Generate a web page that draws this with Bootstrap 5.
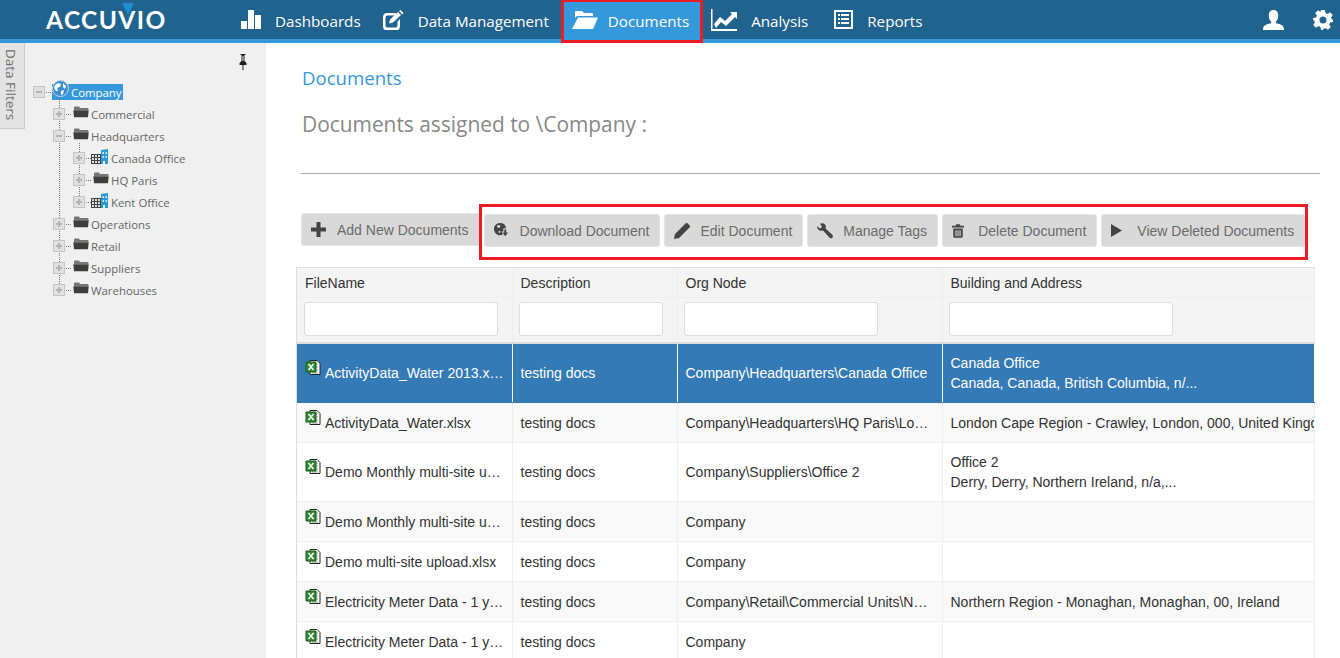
<!DOCTYPE html>
<html lang="en"><head><meta charset="utf-8"><title>Documents</title>
<link href="https://cdn.jsdelivr.net/npm/bootstrap@5.3.0/dist/css/bootstrap.min.css" rel="stylesheet">
<script src="https://cdn.jsdelivr.net/npm/bootstrap@5.3.0/dist/js/bootstrap.bundle.min.js"></script>
<style>
html,body{height:658px;overflow:hidden;background:#fff}
body{font-family:"Liberation Sans",Arial,sans-serif;font-size:14px;color:#333}
.top-bar{height:43px;background:#20638f;border-bottom:4px solid #3498db;padding:0;font-family:"Open Sans",sans-serif;flex-wrap:nowrap;align-items:stretch}
.brand{width:238px;padding-left:46px;position:relative;color:#fff;font:700 24.5px/39px "Lato",sans-serif;letter-spacing:1.4px;flex:none}
.brand-tri{position:absolute;left:122px;top:3px}
.top-link{display:flex;align-items:center;color:#fff;font-size:15.2px;height:43px;padding:1px 0 1px;text-decoration:none;flex:none;white-space:nowrap}
.top-link svg{fill:#fff;flex:none;margin-right:14px;margin-bottom:4px}
.top-link.on{background:#3498db;border:3px solid #ed1c24;border-top-width:2px;padding:0 11px 0 8px;margin-left:12px}
.top-link.on svg{margin-right:10px;margin-bottom:2px}
.nl-dash{margin-left:3px}.nl-data{margin-left:22px}.nl-ana{margin-left:8px}.nl-rep{margin-left:26px}
.nl-user{margin-left:auto}.nl-gear{margin:0 7px 0 29px}
.nl-user svg,.nl-gear svg{margin-right:0}
.app-body{height:615px}
.tab-col{width:25px;background:#f0f0f0;flex:none}
.tab-v{width:25px;height:86px;background:#e3e3e3;border-right:1px solid #ccc;border-bottom:1px solid #ccc;writing-mode:vertical-rl;color:#707070;font:13.5px/26px "Open Sans",sans-serif;padding-top:6px}
.side{width:241px;background:#f0f0f0;flex:none;font-family:"Open Sans",sans-serif;font-size:11.4px;color:#666;position:relative}
.pin{position:absolute;left:213px;top:11px}
.tree-root{margin:38px 0 0 8px;padding:0;list-style:none}
.tree-kids{padding:0 0 0 20px;margin:0;list-style:none;position:relative}
.tree-kids::before{content:"";position:absolute;left:26px;top:-4px;bottom:11px;border-left:1px dotted #777}
.node{height:22px;display:flex;align-items:center;white-space:nowrap;position:relative}
.box{width:12px;height:12px;flex:none;border:1px solid #c4c4c4;background:#e0e0e0;position:relative;margin-right:8px;z-index:1}
.box::before{content:"";position:absolute;left:2px;right:2px;top:4px;height:2px;background:#b4b4b4}
.box.plus::after{content:"";position:absolute;top:2px;bottom:2px;left:4px;width:2px;background:#b4b4b4}
.node::after{content:"";position:absolute;left:13px;top:11px;width:5px;border-top:1px dotted #777}
.box.b-3{margin-right:6px}
.folder{margin-bottom:5px;flex:none}
.bldg{margin-bottom:3px;flex:none}
.indent{margin-left:2px}
.lbl{line-height:17px;margin-left:2px}
.sel-wrap{display:flex;align-items:center;background:#3498db;color:#fff;height:16px;margin-left:-1px;padding-right:1px}
.globe{margin-top:-7px;flex:none}
.main{flex:1;padding:0 0 0 30px;min-width:0;overflow:hidden}
.crumb{color:#3498db;font:18.6px/24px "Open Sans",sans-serif;margin:23px 0 0 6px}
.sub-title{color:#888;font:20.9px/30px "Open Sans",sans-serif;margin:19px 0 0 6px}
.rule{margin:34px 20px 0 5px;border-top:1px solid #aaa;opacity:1}
.tool-row{margin:30px 0 0 5px;align-items:flex-start;height:56px}
.tool-row>.tbtn{margin-top:9px}
.tool-group{border:3px solid #ed1c24;height:56px;padding:0 0 3px 2px;gap:4px;align-items:center;margin-left:-1px}
.tbtn{display:flex;align-items:center;height:33px;background:#d9d9d9;border:1px solid #e4e4e4;border-radius:3px;color:#6b6b6b;font-size:14px;padding:2px 10px 0 9px;white-space:nowrap}
.ico{width:26px;flex:none;display:flex;fill:#444;margin-top:-2px}
.grid-wrap{width:1019px;margin-top:7px;border:1px solid #ddd;border-bottom:0}
.doc-table{table-layout:fixed;width:1018px;margin:0;border-collapse:collapse;--bs-table-bg:transparent}
.c1{width:215px}.c2{width:165px}.c3{width:265px}
.doc-table th{background:#f4f4f4;font-weight:400;color:#333;padding:3px 8px 0;border:0;border-right:1px solid #eee;height:29px;vertical-align:middle;box-shadow:none}
.doc-table .filter td{background:#f4f4f4;padding:4px 6px 0;height:46px;border-top:1px solid #eee;border-bottom:2px solid #ddd;vertical-align:top}
.doc-table .filter td:first-child{padding-left:7px}
.doc-table .form-control{height:34px;border-radius:3px;border:1px solid #ddd;padding:0}
.f-194{width:194px}.f-144{width:144px}.f-224{width:224px}
.doc-table td{padding:1px 8px 0;border:0;border-right:1px solid #eee;border-bottom:1px solid #eee;vertical-align:middle;height:40px;line-height:20px;white-space:nowrap;overflow:hidden;text-overflow:ellipsis;color:#333;box-shadow:none}
.doc-table td.bare{text-overflow:clip}
.doc-table tr.tall td{height:59px}
.doc-table tr.alt td{background:#f9f9f9}
.doc-table tr.pick td{background:#337ab7;color:#fff;border-right-color:#fff;border-bottom-color:#337ab7}
.xl{vertical-align:-1px;margin-right:4px;position:relative;top:-3px}
</style></head><body>
<svg width="0" height="0" class="d-block position-absolute">
<symbol id="folder" viewBox="0 0 16 12"><path d="M1 3V1.400Q1 .6 2 .6H6L7 2H14.500Q15.500 2 15.500 3V4H1Z" fill="#777"/><path d="M.3 4.300H15.700L15 11.300H1Z" fill="#3d3d3d"/></symbol>
<symbol id="bldg" viewBox="0 0 18 16"><path d="M0 5h10v10H0z" fill="#444"/><path d="M1 6h2v2H1zM4 6h2v2H4zM7 6h2v2H7zM1 9h2v2H1zM4 9h2v2H4zM7 9h2v2H7zM1 12h2v2H1zM4 12h2v2H4zM7 12h2v2H7z" fill="#ddd"/><path d="M10 1l7-1v15h-3v-3h-2v3h-2z" fill="#2c9ad8"/><path d="M11.500 3h1.500v2h-1.500zM14.500 3h1.500v2h-1.500zM11.500 7h1.500v2h-1.500zM14.500 7h1.500v2h-1.500z" fill="#cfeafa"/></symbol>
<symbol id="xls" viewBox="0 0 16 16"><path d="M5 .5h7l3 3v11H5z" fill="#fff" stroke="#222"/><path d="M7 4h6M7 7h6M7 10h6M7 13h6" stroke="#9a9a9a"/><path d="M1 2h10v10H1z" fill="#2f8a2f" stroke="#1d5e1d"/><path d="M3.500 4l5 6M8.500 4l-5 6" stroke="#fff" stroke-width="1.500"/></symbol>
</svg>
<nav class="navbar top-bar d-flex">
<div class="brand">ACCUVIO<svg class="brand-tri" width="12" height="12" viewBox="0 0 12 12"><path d="M0 0H12L6 12Z" fill="#1b8fd0"/></svg></div>
<a class="top-link nl-dash" href="#"><svg width="20" height="19" viewBox="0 0 20 19"><path d="M0 11h6v8H0zM7 0h6v19H7zM14 5h6v14h-6z"/></svg>Dashboards</a>
<a class="top-link nl-data" href="#"><svg width="21" height="20" viewBox="0 0 21 20"><path d="M4 3h9v2.500H4.500q-2 0-2 2v8q0 2 2 2h8q2 0 2-2v-4l2.500-2.500v7q0 4.500-4.500 4.500H4q-4 0-4-4.500V7.500Q0 3 4 3Z"/><path d="M7 9.500L15 2l3 3-8 7.500-4 1ZM16 1l1.500-1 3 3-1 1.500Z"/></svg>Data Management</a>
<a class="top-link on" href="#"><svg width="26" height="20" viewBox="0 0 26 20"><path d="M3 8V2Q3 1 4 1H10L12 3H20Q21 3 21 4V6H6Q4 6 3 8Z"/><path d="M6 7.500H26L21 19H0Z"/></svg>Documents</a>
<a class="top-link nl-ana" href="#"><svg width="26" height="22" viewBox="0 0 26 22"><path d="M0 0h1.500v20H26v2H0z"/><path d="M3 15l6-7 5 4 7-7-2-2h7v7l-2-2-9 9-5-4-5 6Z"/></svg>Analysis</a>
<a class="top-link nl-rep" href="#"><svg width="19" height="19" viewBox="0 0 19 19"><path fill-rule="evenodd" d="M0 0h19v19H0zM2 2v15h15V2zM4 4h2v2H4zM7 4h8v2H7zM4 8h2v2H4zM7 8h8v2H7zM4 12h2v2H4zM7 12h8v2H7z"/></svg>Reports</a>
<a class="top-link nl-user" href="#" aria-label="User"><svg width="21" height="20" viewBox="0 0 22 21"><path d="M11 0q5 0 5 6 0 4-2.500 6.500V14Q22 15 22 20v1H0v-1q0-5 8.500-6v-1.500Q6 10 6 6q0-6 5-6Z"/></svg></a>
<a class="top-link nl-gear" href="#" aria-label="Settings"><svg width="20" height="20" viewBox="0 0 20 20"><path fill-rule="evenodd" d="M8 0h4l.5 3 2 .9L17 2.200 19.800 5l-1.700 2.500.9 2 1 .5v2l-3 .5-.9 2 1.700 2.500L15 19.800l-2.500-1.700-2 .9-.5 1H8l-.5-3-2-.9L3 17.800.2 15l1.700-2.500-.9-2-1-.5V8l3-.5.9-2L2.200 3 5 .2l2.500 1.700 .5-1.900ZM10 6.500a3.500 3.500 0 1 0 0 7 3.500 3.500 0 0 0 0-7Z"/></svg></a>
</nav>
<div class="d-flex app-body">
<div class="tab-col"><div class="tab-v">Data Filters</div></div>
<aside class="side">
<svg class="pin" width="10" height="16" viewBox="0 0 10 16"><path d="M2.500 0h5v1h-1v6l2 2v2H1.500V9l2-2V1h-1z" fill="#222"/><path d="M4.500 10h1v6h-1z" fill="#222"/><path d="M4.500 2h1v5h-1z" fill="#eee"/></svg>
<ul class="tree-root">
<li><div class="node"><span class="box"></span><span class="sel-wrap"><svg class="globe" width="17" height="17" viewBox="0 0 17 17"><circle cx="8.500" cy="8.500" r="8" fill="#3b8fd6" stroke="#cfd8e0"/><path d="M3 5l3-2 3 1-1 3-3 1 1 3-2 0-2-3ZM11 3l3 3-1 3-2-2ZM9 11l3-1-1 4-2 1Z" fill="#fff"/></svg><span class="lbl">Company</span></span></div>
<ul class="tree-kids">
<li><div class="node"><span class="box plus"></span><svg class="folder" width="16" height="12"><use href="#folder"/></svg><span class="lbl">Commercial</span></div></li>
<li><div class="node"><span class="box"></span><svg class="folder" width="16" height="12"><use href="#folder"/></svg><span class="lbl">Headquarters</span></div>
<ul class="tree-kids">
<li><div class="node"><span class="box plus b-3"></span><svg class="bldg" width="18" height="16"><use href="#bldg"/></svg><span class="lbl">Canada Office</span></div></li>
<li><div class="node"><span class="box plus b-3"></span><svg class="folder indent" width="16" height="12"><use href="#folder"/></svg><span class="lbl">HQ Paris</span></div></li>
<li><div class="node"><span class="box plus b-3"></span><svg class="bldg" width="18" height="16"><use href="#bldg"/></svg><span class="lbl">Kent Office</span></div></li>
</ul></li>
<li><div class="node"><span class="box plus"></span><svg class="folder" width="16" height="12"><use href="#folder"/></svg><span class="lbl">Operations</span></div></li>
<li><div class="node"><span class="box plus"></span><svg class="folder" width="16" height="12"><use href="#folder"/></svg><span class="lbl">Retail</span></div></li>
<li><div class="node"><span class="box plus"></span><svg class="folder" width="16" height="12"><use href="#folder"/></svg><span class="lbl">Suppliers</span></div></li>
<li><div class="node"><span class="box plus"></span><svg class="folder" width="16" height="12"><use href="#folder"/></svg><span class="lbl">Warehouses</span></div></li>
</ul></li>
</ul>
</aside>
<main class="main">
<div class="crumb">Documents</div>
<div class="sub-title">Documents assigned to \Company :</div>
<hr class="rule">
<div class="d-flex tool-row">
<button class="tbtn" type="button"><span class="ico"><svg width="15" height="15" viewBox="0 0 15 15"><path d="M5.500 0h4v5.500H15v4H9.500V15h-4V9.500H0v-4h5.500z"/></svg></span>Add New Documents</button>
<div class="d-flex tool-group">
<button class="tbtn" type="button"><span class="ico"><svg width="15" height="15" viewBox="0 0 16 16"><path d="M6.500 0a6.500 6.500 0 0 1 6.400 5.500H10V9H8l1.500 3.200A6.500 6.500 0 1 1 6.500 0Z"/><path d="M11 7h2v3h2l-3 4-3-4h2z"/><path d="M3 3l2-1 2 1-1 2-2 0zM5 8l2 1-1 2-1-1z" fill="#d9d9d9"/></svg></span>Download Document</button>
<button class="tbtn" type="button"><span class="ico"><svg width="16" height="16" viewBox="0 0 16 16"><path d="M0 16l1-5L10.500 1.500l4 4L5 15ZM11.500.5q1-1 2-.2l2.200 2.200q.8 1-.2 2L14.500 5.500l-4-4Z"/></svg></span>Edit Document</button>
<button class="tbtn" type="button"><span class="ico"><svg width="16" height="16" viewBox="0 0 16 16"><path d="M0 3l3 2.500L5 4 3 .8Q6-.8 8 1.500 9.500 3.500 8.500 5.500L15.500 12q1 1.500-.2 2.800-1.300 1-2.700 0L6 7.500Q3 8.500 1.200 6.500 0 5 0 3Z"/></svg></span>Manage Tags</button>
<button class="tbtn" type="button"><span class="ico"><svg width="12" height="14" viewBox="0 0 14 16"><path d="M5 0h4l1 2h4v2H0V2h4zM1.500 5h11v9.500q0 1.500-1.500 1.500H3q-1.500 0-1.500-1.500ZM4 7v7h1.300V7zM6.400 7v7h1.300V7zM8.800 7v7h1.300V7z" fill-rule="evenodd"/></svg></span>Delete Document</button>
<button class="tbtn" type="button"><span class="ico"><svg width="11" height="13" viewBox="0 0 12 14"><path d="M0 0l12 7-12 7z"/></svg></span>View Deleted Documents</button>
</div></div>
<div class="grid-wrap">
<table class="table doc-table">
<colgroup><col class="c1"><col class="c2"><col class="c3"><col></colgroup>
<thead><tr><th>FileName</th><th>Description</th><th>Org Node</th><th>Building and Address</th></tr>
<tr class="filter"><td><input class="form-control f-194" aria-label="FileName"></td><td><input class="form-control f-144" aria-label="Description"></td><td><input class="form-control f-194" aria-label="Org Node"></td><td><input class="form-control f-224" aria-label="Building and Address"></td></tr></thead>
<tbody>
<tr class="pick tall"><td><svg class="xl" width="16" height="16"><use href="#xls"/></svg>ActivityData_Water 2013.xlsx</td><td>testing docs</td><td>Company\Headquarters\Canada Office</td><td>Canada Office<br>Canada, Canada, British Columbia, n/...</td></tr>
<tr class="alt"><td><svg class="xl" width="16" height="16"><use href="#xls"/></svg>ActivityData_Water.xlsx</td><td>testing docs</td><td>Company\Headquarters\HQ Paris\London</td><td class="bare">London Cape Region - Crawley, London, 000, United Kingdom</td></tr>
<tr class="tall"><td><svg class="xl" width="16" height="16"><use href="#xls"/></svg>Demo Monthly multi-site upload.xlsx</td><td>testing docs</td><td>Company\Suppliers\Office 2</td><td>Office 2<br>Derry, Derry, Northern Ireland, n/a,...</td></tr>
<tr class="alt"><td><svg class="xl" width="16" height="16"><use href="#xls"/></svg>Demo Monthly multi-site upload.xlsx</td><td>testing docs</td><td>Company</td><td></td></tr>
<tr><td><svg class="xl" width="16" height="16"><use href="#xls"/></svg>Demo multi-site upload.xlsx</td><td>testing docs</td><td>Company</td><td></td></tr>
<tr class="alt"><td><svg class="xl" width="16" height="16"><use href="#xls"/></svg>Electricity Meter Data - 1 year.xlsx</td><td>testing docs</td><td>Company\Retail\Commercial Units\Newry</td><td>Northern Region - Monaghan, Monaghan, 00, Ireland</td></tr>
<tr><td><svg class="xl" width="16" height="16"><use href="#xls"/></svg>Electricity Meter Data - 1 year.xlsx</td><td>testing docs</td><td>Company</td><td></td></tr>
</tbody></table>
</div>
</main>
</div>
</body></html>
